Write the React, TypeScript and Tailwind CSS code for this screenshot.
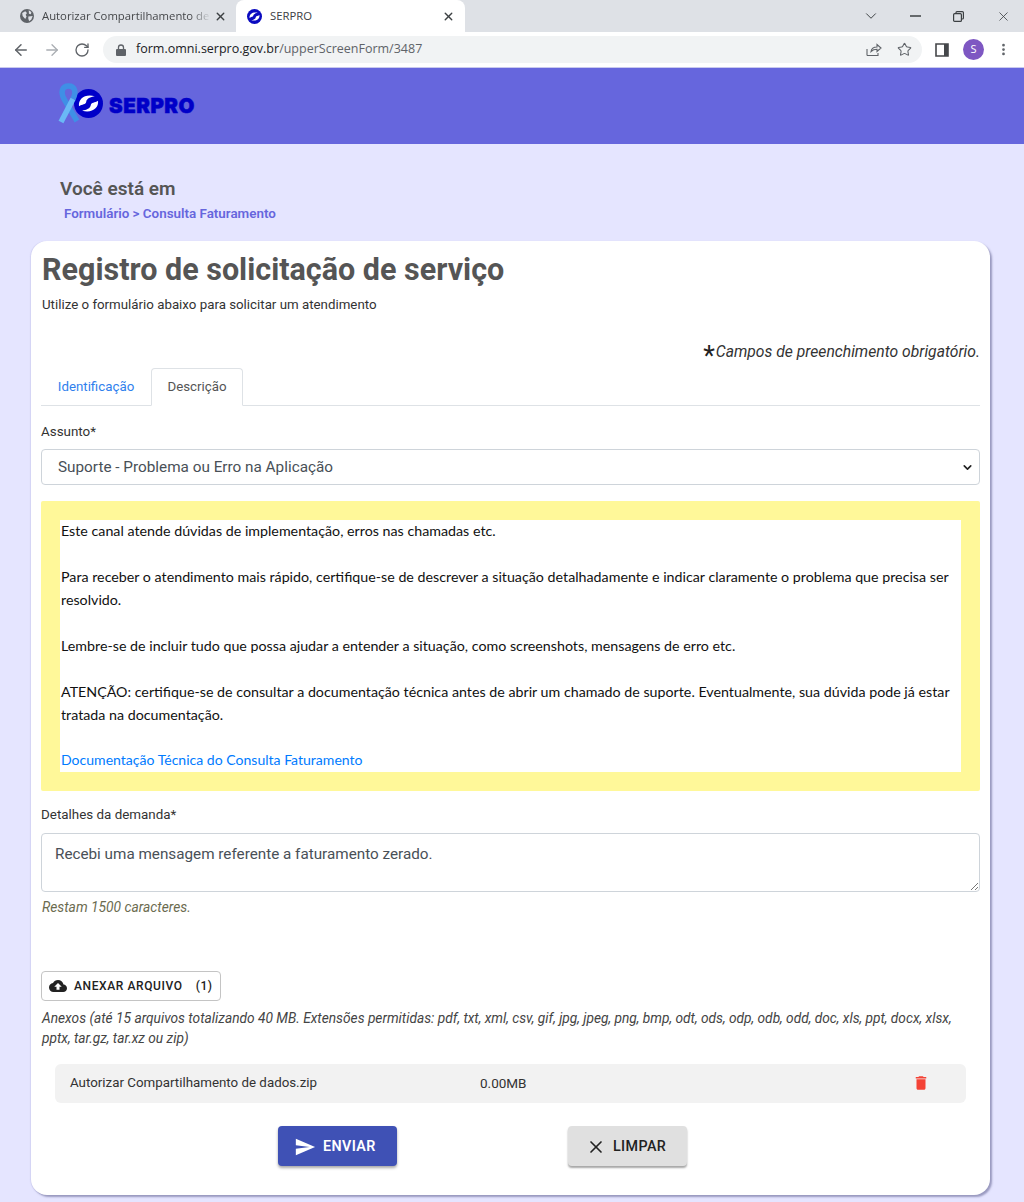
import { ArrowLeft, ArrowRight, ChevronDown, MoreVertical, RotateCw, Star, X } from 'lucide-react';

const chromeFont = '[font-family:"Open_Sans",Arial,sans-serif]';

function Globe() {
  return (
    <svg width="14" height="14" viewBox="0 0 16 16" className="shrink-0">
      <circle cx="8" cy="8" r="8" fill="#5f6368" />
      <path d="M2.500 4.500 6 2.500 8 4.500 6.500 6.500 7.500 8.500 6 11.500 3 8Z M10 1.500 13 3.500 12.500 6 10.200 5.500Z M9.500 8.500 14.500 8 13 12 10.500 14 9.500 11Z" fill="#dee1e6" />
    </svg>
  );
}

function SerproMark({ size, color, fg }: { size: number; color: string; fg: string }) {
  const swoosh = 'M5.500 19C4.500 11 12 5 23 8 18 9 14 10.500 13.500 14 13 17.500 9 16.500 5.500 19Z';
  return (
    <svg width={size} height={size} viewBox="0 0 32 32" className="shrink-0">
      <circle cx="16" cy="16" r="16" fill={color} />
      <path d={swoosh} fill={fg} />
      <path d={swoosh} fill={fg} transform="rotate(180 16 16)" />
    </svg>
  );
}

function BrowserChrome() {
  return (
    <div className={`${chromeFont} shrink-0`}>
      <div className="h-8 bg-[#dee1e6] flex items-end">
        <div className="ml-[20px] w-[208px] h-8 flex items-center pr-[1px]">
          <Globe />
          <span className="ml-2 w-[170px] overflow-hidden whitespace-nowrap text-[11.300px] text-[#45474a] [mask-image:linear-gradient(to_right,#000_88%,transparent)]">Autorizar Compartilhamento de dados</span>
          <X size={13} strokeWidth={2.500} className="ml-[3px] text-[#3c4043] shrink-0" />
        </div>
        <div className="ml-[8px] w-[229px] h-8 bg-white rounded-t-lg flex items-center pl-[11px] pr-[10px]">
          <SerproMark size={15} color="#0a0ac0" fg="#ffffff" />
          <span className="ml-2 flex-1 text-[11.300px] text-[#3c4043]">SERPRO</span>
          <X size={13} strokeWidth={2.500} className="text-[#3c4043]" />
        </div>
        <div className="flex-1 h-8 flex items-center text-[#3c4043]">
          <ChevronDown size={18} strokeWidth={1.300} className="ml-[397px]" />
          <svg width="11" height="2" viewBox="0 0 11 2" className="ml-[30px]">
            <path d="M0 1H11" stroke="#3c4043" strokeWidth="1.500" />
          </svg>
          <svg width="11" height="11" viewBox="0 0 11 11" fill="none" stroke="#3c4043" strokeWidth="1.200" className="ml-[32px]">
            <path d="M3 2.500V1.500Q3 .6 4 .6H9.400Q10.400 .6 10.400 1.500V7Q10.400 8 9.400 8H8.500" />
            <rect x=".6" y="2.700" width="7.800" height="7.700" rx="1" />
          </svg>
          <X size={15} strokeWidth={1.300} className="ml-[32px]" />
        </div>
      </div>
      <div className="h-[35px] bg-white flex items-center border-b border-[#c9c9ee] box-content">
        <ArrowLeft size={18} strokeWidth={2} className="ml-[12px] text-[#5f6368]" />
        <ArrowRight size={18} strokeWidth={1.700} className="ml-[13px] text-[#a9adb2]" />
        <RotateCw size={16} strokeWidth={2} className="ml-[13px] text-[#5f6368]" />
        <div className="ml-[13px] w-[819px] h-[27px] rounded-full bg-[#f1f3f4] flex items-center pl-[13px] pr-[10px]">
          <svg width="10" height="12" viewBox="0 0 10 12" className="shrink-0">
            <path d="M1 5H9Q10 5 10 6V11Q10 12 9 12H1Q0 12 0 11V6Q0 5 1 5Z" fill="#5f6368" />
            <path d="M2.500 5V3.500A2.500 2.500 0 0 1 7.500 3.500V5" fill="none" stroke="#5f6368" strokeWidth="1.300" />
          </svg>
          <span className="ml-[10px] flex-1 text-[12.500px] text-[#5f6368]">
            <span className="text-[#202124]">form.omni.serpro.gov.br</span>/upperScreenForm/3487
          </span>
          <svg width="16" height="15" viewBox="0 0 16 15" fill="none" stroke="#5f6368" strokeWidth="1.100" className="mr-[15px]">
            <path d="M1 13.500V7M1 13.500H12V11M5 9.500C5.500 6.500 8 5 11 5V2.500L15 6 11 9.500V7.200C8.500 7.200 6.500 8 5 9.500Z" />
          </svg>
          <Star size={15} strokeWidth={1.700} className="text-[#5f6368]" />
        </div>
        <svg width="14" height="14" viewBox="0 0 14 14" className="ml-[13px]">
          <path d="M1 1H13V13H1Z" fill="#fff" stroke="#45474a" strokeWidth="1.600" />
          <path d="M9 1H13V13H9Z" fill="#45474a" />
        </svg>
        <div className="ml-[14px] w-[21px] h-[21px] rounded-full bg-[#7e57c2] flex items-center justify-center text-[11px] text-white">S</div>
        <MoreVertical size={15} strokeWidth={2.400} className="ml-[12px] text-[#5f6368]" />
      </div>
    </div>
  );
}

function Ribbon() {
  return (
    <svg width="24" height="42" viewBox="0 0 24 42" fill="none" strokeWidth="5.500">
      <path d="M20 38 7 16C3.500 9 5 3 11.500 3 18 3 19.500 9 16 16" stroke="#3f8fe6" />
      <path d="M4 39 16 16" stroke="#6ab9f6" />
    </svg>
  );
}

export default function App() {
  return (
    <div className="w-[1024px] h-[1202px] overflow-hidden bg-[#e5e5ff] flex flex-col [font-family:Roboto,sans-serif]">
      <BrowserChrome />
      <div className="h-[76px] bg-[#6666dd] flex items-center pl-[57px] shrink-0">
        <div className="relative w-[52px] h-[42px] -mt-[4px] shrink-0">
          <div className="absolute left-[17px] top-[6px]">
            <SerproMark size={29} color="#0000c8" fg="#ffffff" />
          </div>
          <div className="absolute left-0 top-0">
            <Ribbon />
          </div>
        </div>
        <span className="text-[20.500px] leading-none font-black tracking-[0.500px] text-[#0000c8] [-webkit-text-stroke:0.500px_#0000c8] [font-family:Inter,sans-serif]">SERPRO</span>
      </div>

      <div className="pl-[60px] pt-[34px] h-[97px] shrink-0">
        <div className="text-[19px] leading-[22px] font-semibold text-[#555555]">Você está em</div>
        <div className="ml-[4px] mt-[5px] text-[13.400px] leading-[18px] font-semibold text-[#6666dd]">Formulário &gt; Consulta Faturamento</div>
      </div>

      <div className="ml-[31px] w-[959px] h-[954px] shrink-0 rounded-[16px] bg-white px-[10px] pt-[11px] shadow-[2px_2px_2px_rgba(80,80,130,0.5),-1px_0_1px_rgba(80,80,160,0.12)]">
        <h1 className="ml-px text-[30.500px] leading-[36px] font-bold text-[#555555]">Registro de solicitação de serviço</h1>
        <p className="ml-px mt-[8px] text-[13.300px] leading-[18px] text-[#333333]">Utilize o formulário abaixo para solicitar um atendimento</p>

        <div className="mt-[24px] h-[28px] flex items-center justify-end text-[15.700px] italic text-[#333333]">
          <span className="text-[27px] not-italic leading-none text-[#222222] mt-[8px] mr-px">*</span>Campos de preenchimento obrigatório.
        </div>

        <div className="mt-[2px] h-[38px] flex items-end border-b border-[#dee2e6]">
          <div className="w-[110px] h-[37px] flex items-center justify-center text-[13.300px] text-[#2f80ed]">Identificação</div>
          <div className="w-[92px] h-[38px] -mb-px bg-white border border-[#dee2e6] border-b-white rounded-t flex items-center justify-center text-[13.300px] text-[#555555]">Descrição</div>
        </div>

        <label className="block mt-[17px] text-[13.400px] leading-[18px] text-[#333333]">Assunto*</label>
        <div className="mt-[8px] h-[36px] border border-[#ced4da] rounded flex items-center justify-between pl-[16px] pr-[5px] text-[15.300px] text-[#495057]">
          <span>Suporte - Problema ou Erro na Aplicação</span>
          <ChevronDown size={13} strokeWidth={3} className="text-[#222222]" />
        </div>

        <div className="mt-[16px] h-[290px] rounded-[2px] bg-[#fff899] p-[19px]">
          <div className="h-[252px] pl-px bg-white text-[14.250px] leading-[23px] text-[#111111] [font-family:Lato,sans-serif]">
            <p className="-translate-y-px">Este canal atende dúvidas de implementação, erros nas chamadas etc.</p>
            <p className="mt-[23px] -translate-y-px">Para receber o atendimento mais rápido, certifique-se de descrever a situação detalhadamente e indicar claramente o problema que precisa ser resolvido.</p>
            <p className="mt-[23px] -translate-y-px">Lembre-se de incluir tudo que possa ajudar a entender a situação, como screenshots, mensagens de erro etc.</p>
            <p className="mt-[23px] -translate-y-px">ATENÇÃO: certifique-se de consultar a documentação técnica antes de abrir um chamado de suporte. Eventualmente, sua dúvida pode já estar tratada na documentação.</p>
            <p className="mt-[22px] -translate-y-px text-[14.050px] text-[#007bff]">Documentação Técnica do Consulta Faturamento</p>
          </div>
        </div>

        <label className="block mt-[15px] text-[13.400px] leading-[18px] text-[#333333]">Detalhes da demanda*</label>
        <div className="mt-[9px] h-[59px] border border-[#ced4da] rounded pl-[13px] pt-[10px] text-[15.250px] leading-[20px] text-[#495057] relative">
          Recebi uma mensagem referente a faturamento zerado.
          <svg width="7" height="7" viewBox="0 0 7 7" className="absolute right-px bottom-px" stroke="#777777" fill="none">
            <path d="M0 7 7 0M4 7 7 4" />
          </svg>
        </div>
        <p className="ml-px mt-[7px] text-[13.800px] leading-[17px] italic text-[#6b6b4f]">Restam 1500 caracteres.</p>

        <div className="mt-[55px] w-[180px] h-[30px] pb-px border border-[#c4c4c4] rounded flex items-center pl-[7px] text-xs font-medium tracking-[0.600px] text-[#222222]">
          <svg width="18" height="18" viewBox="0 0 24 24" fill="#222222">
            <path d="M19.350 10.040C18.670 6.590 15.640 4 12 4 9.110 4 6.600 5.640 5.350 8.040 2.340 8.360 0 10.910 0 14c0 3.310 2.690 6 6 6h13c2.760 0 5-2.240 5-5 0-2.640-2.050-4.780-4.650-4.960zM14 13v4h-4v-4H7l5-5 5 5h-3z" />
          </svg>
          <span className="ml-[7px]">ANEXAR ARQUIVO</span>
          <span className="ml-[13px]">(1)</span>
        </div>
        <p className="ml-px mt-[7px] text-[13.740px] leading-[20px] italic text-[#444444]">Anexos (até 15 arquivos totalizando 40 MB. Extensões permitidas: pdf, txt, xml, csv, gif, jpg, jpeg, png, bmp, odt, ods, odp, odb, odd, doc, xls, ppt, docx, xlsx, pptx, tar.gz, tar.xz ou zip)</p>

        <div className="mt-[16px] ml-[14px] w-[911px] h-[39px] pb-px rounded-md bg-[#f2f2f2] flex items-center text-[13.500px] text-[#333333]">
          <span className="ml-[15px] w-[410px] text-[13.340px]">Autorizar Compartilhamento de dados.zip</span>
          <span className="w-[432px]">0.00MB</span>
          <svg width="18" height="18" viewBox="0 0 24 24" fill="#f44336">
            <path d="M6 19c0 1.100.9 2 2 2h8c1.100 0 2-.9 2-2V7H6v12zM19 4h-3.500l-1-1h-5l-1 1H5v2h14V4z" />
          </svg>
        </div>

        <div className="mt-[23px] flex">
          <button className="ml-[237px] w-[119px] h-[40px] pl-[16px] pt-px rounded bg-[#3f51b5] flex items-center gap-[7px] text-[14.300px] font-semibold tracking-[0.400px] text-white shadow-[0_2px_3px_rgba(0,0,0,0.35)]">
            <svg width="22" height="22" viewBox="0 0 24 24" fill="#ffffff">
              <path d="M2.010 21 23 12 2.010 3 2 10l15 2-15 2z" />
            </svg>
            ENVIAR
          </button>
          <button className="ml-[171px] w-[119px] h-[40px] pl-[18px] pt-px rounded bg-[#e0e0e0] flex items-center gap-[7px] text-[14.300px] font-medium tracking-[0.400px] text-[#222222] shadow-[0_2px_2px_rgba(0,0,0,0.35)]">
            <X size={20} strokeWidth={2} />
            LIMPAR
          </button>
        </div>
      </div>
    </div>
  );
}
